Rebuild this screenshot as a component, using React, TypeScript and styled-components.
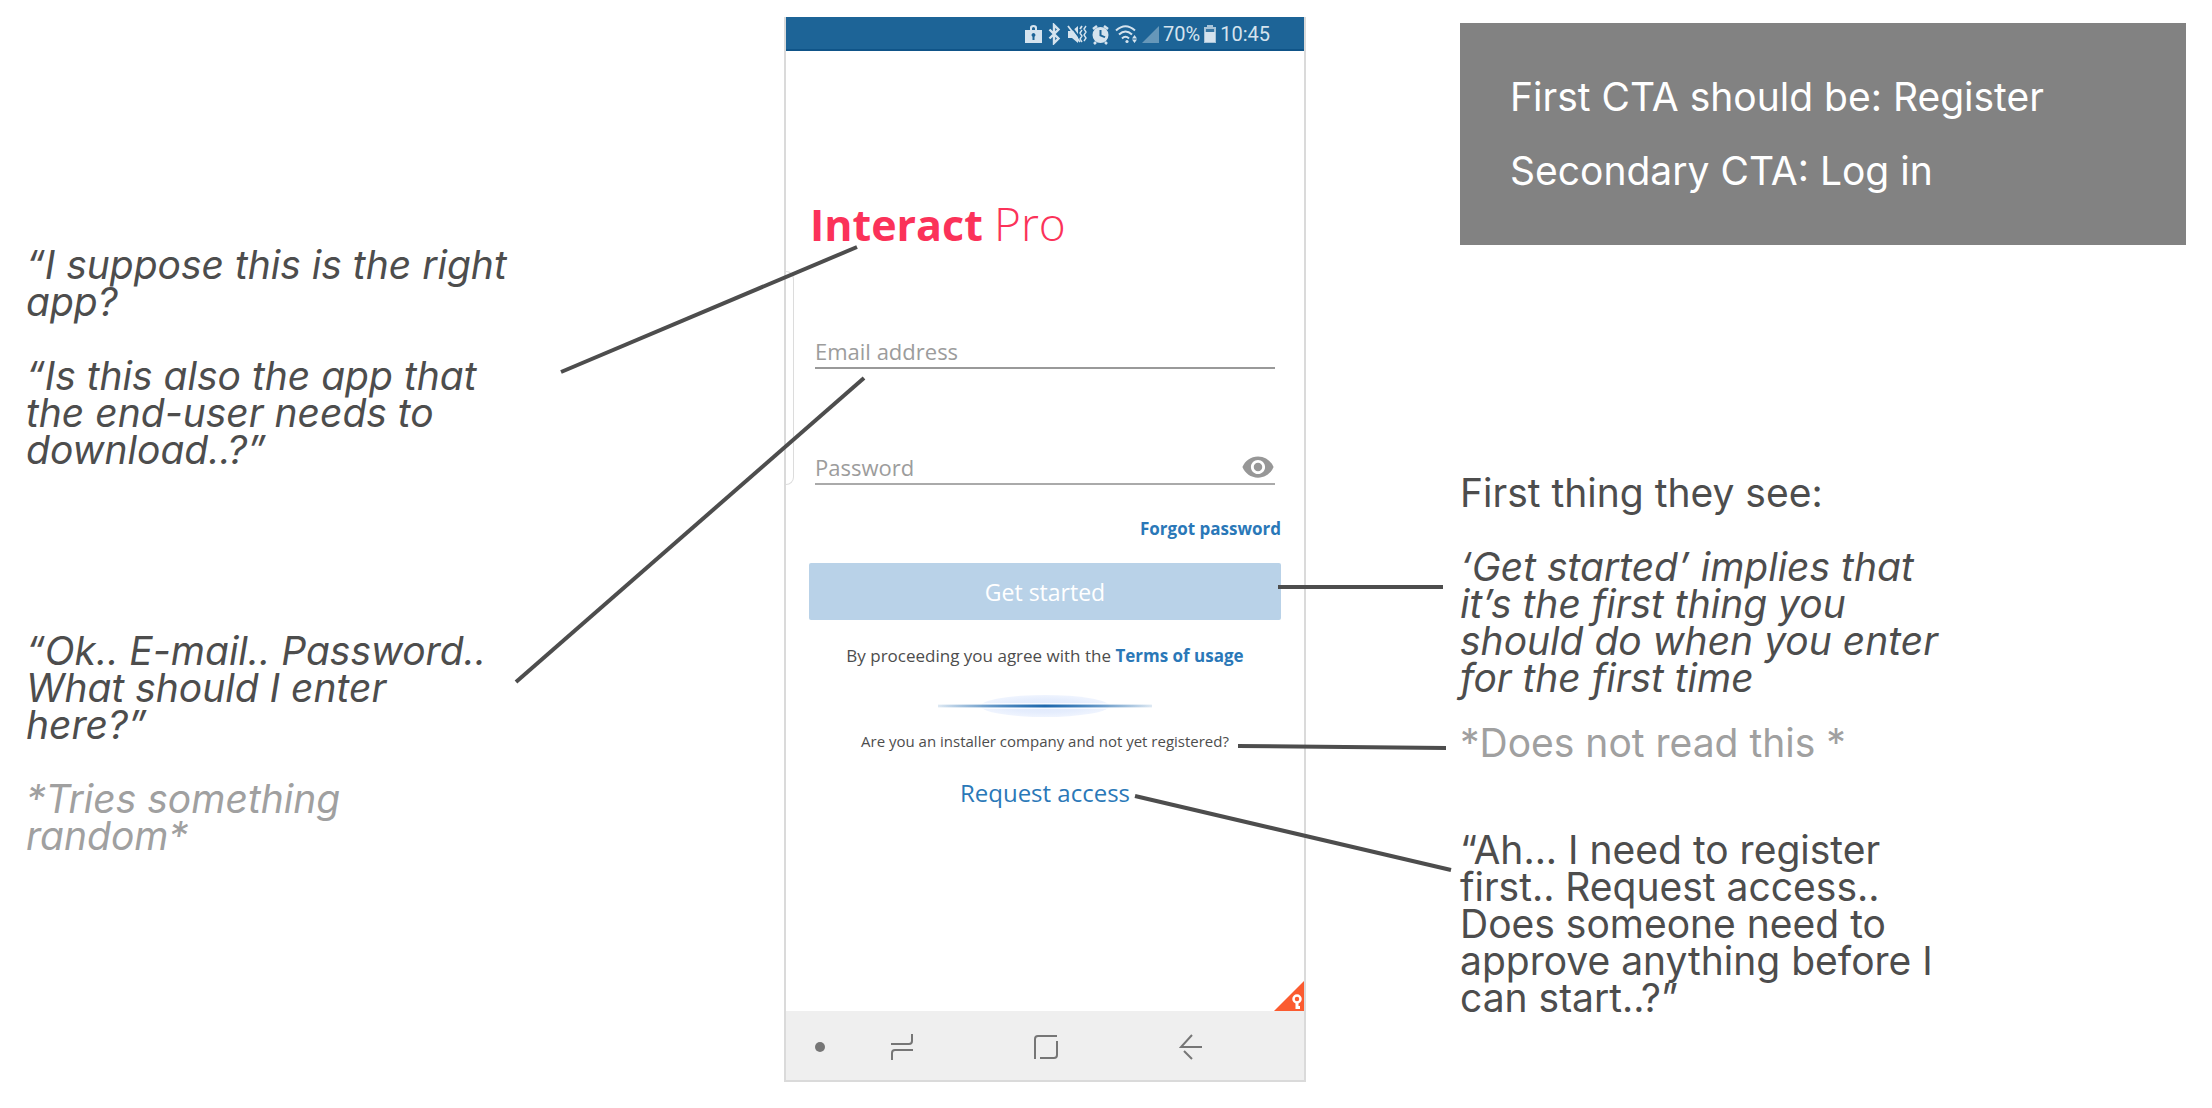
import React from "react";
import styled, { createGlobalStyle } from "styled-components";
import { MdVisibility } from "react-icons/md";

const ink = "#4d4d4d";
const muted = "#a0a0a0";
const blue = "#2a78b8";
const noteFont = `Inter, "Noto Sans", sans-serif`;
const appFont = `"Open Sans", "Noto Sans", sans-serif`;

const GlobalStyle = createGlobalStyle`
  *, *::before, *::after { box-sizing: border-box; }
  body { margin: 0; background: #fff; }
  p, h1, h2 { margin: 0; }
`;

const Board = styled.main`
  display: grid;
  grid-template-columns: minmax(520px, 784fr) 522px minmax(520px, 906fr);
  align-items: start;
  min-height: 100vh;
  color: ${ink};
  font-family: ${noteFont};
`;

const LeftNotes = styled.section`
  display: flex;
  flex-direction: column;
  gap: 164px;
  padding: 246px 0 0 26px;
`;

const RightNotes = styled.section`
  display: flex;
  flex-direction: column;
  padding: 23px 26px 0 154px;
`;

const Note = styled.div<{ $gap?: number }>`
  display: flex;
  flex-direction: column;
  gap: 37px;
  margin-top: ${(p) => p.$gap ?? 0}px;
`;

const Quote = styled.p<{ $italic?: boolean; $muted?: boolean }>`
  font-size: 39px;
  line-height: 37px;
  font-style: ${(p) => (p.$italic ? "italic" : "normal")};
  color: ${(p) => (p.$muted ? muted : "inherit")};
  white-space: nowrap;
`;

const Callout = styled.div`
  display: flex;
  flex-direction: column;
  gap: 37px;
  padding: 55px 50px 56px;
  background: #828282;
  color: #fff;
`;

const PhoneSlot = styled.div`
  position: relative;
  padding-top: 17px;
`;

const Phone = styled.article`
  display: flex;
  flex-direction: column;
  border: 2px solid #dadada;
  border-top: 0;
  font-family: ${appFont};
`;

const StatusBar = styled.header`
  display: flex;
  align-items: center;
  justify-content: flex-end;
  gap: 4px;
  height: 34px;
  padding: 2px 34px 0 0;
  background: #1d6497;
  border-bottom: 2px solid #0f5488;
  color: #d5e3ee;
  font-family: Roboto, sans-serif;
  font-size: 20px;
  line-height: 24px;
`;

const Screen = styled.form`
  position: relative;
  display: flex;
  flex-direction: column;
  min-height: 960px;
  padding: 144px 23px 0;
`;

const Logo = styled.h1`
  padding-left: 1px;
  margin-bottom: 80px;
  font-size: 43px;
  line-height: 60px;
  font-weight: 700;
  color: #fb3259;
`;

const LogoLight = styled.span`
  font-size: 46px;
  line-height: 40px;
  font-weight: 300;
`;

const Field = styled.label`
  display: flex;
  align-items: center;
  height: 34px;
  margin: 0 6px;
  border-bottom: 2px solid #999;

  & + & {
    margin-top: 82px;
    border-color: #aaa;
  }
`;

const Input = styled.input`
  flex: 1;
  min-width: 0;
  height: 30px;
  padding: 0;
  border: 0;
  outline: 0;
  background: transparent;
  font-family: ${appFont};
  font-size: 22px;
  line-height: 30px;
  color: ${ink};

  &::placeholder {
    color: #9c9c9c;
    opacity: 1;
  }
`;

const PlainButton = styled.button`
  display: flex;
  align-items: center;
  justify-content: center;
  padding: 0;
  border: 0;
  background: transparent;
  color: inherit;
`;

const EyeButton = styled(PlainButton)`
  color: #979797;
`;

const Link = styled.a`
  color: ${blue};
  font-weight: 700;
  text-decoration: none;
`;

const Forgot = styled(Link)`
  align-self: flex-end;
  margin-top: 32px;
  font-size: 17px;
  line-height: 24px;
`;

const Primary = styled.button`
  height: 57px;
  margin-top: 22px;
  padding: 0;
  border: 0;
  border-radius: 2px;
  background: #b9d2e8;
  color: #fff;
  font-family: ${appFont};
  font-size: 23px;
  line-height: 30px;
`;

const Terms = styled.p`
  margin-top: 24px;
  text-align: center;
  font-size: 17px;
  line-height: 24px;
  font-weight: 500;
`;

const Glow = styled.svg`
  display: block;
  align-self: center;
  margin: 26px 0 11px;
`;

const Hint = styled.p`
  text-align: center;
  font-size: 15px;
  line-height: 24px;
`;

const Request = styled(Link)`
  align-self: center;
  margin-top: 24px;
  font-size: 24px;
  line-height: 32px;
  font-weight: 400;
`;

const EdgeHandle = styled.span`
  position: absolute;
  left: 0;
  top: 220px;
  width: 8px;
  height: 214px;
  border: 1px solid #dcdcdc;
  border-left: 0;
  border-radius: 0 8px 8px 0;
`;

const CornerFlag = styled.svg`
  position: absolute;
  right: 0;
  bottom: 0;
`;

const NavBar = styled.nav`
  display: grid;
  grid-template-columns: 68fr 96fr 192fr 98fr 64fr;
  height: 69px;
  padding-top: 2px;
  background: #efefef;
  color: #767676;
`;

const Connectors = styled.svg`
  position: absolute;
  left: 0;
  top: 0;
  overflow: visible;
  pointer-events: none;
`;

/* Line ends, measured from the phone's left edge. */
const links = [
  [-223, 372, 73, 247],
  [-268, 682, 80, 378],
  [494, 587, 659, 587],
  [454, 746, 662, 748],
  [351, 796, 667, 870],
];

function StatusIcons() {
  return (
    <svg width="134" height="22" viewBox="0 0 134 22" fill="currentColor" aria-hidden="true">
      <path fillRule="evenodd" d="M0 7h5V4.500Q5 2 8.500 2T12 4.500V7h5v13H0zM7 7h3V5.500Q10 4 8.500 4T7 5.500zM8.500 10a2 2 0 0 0-1 3.700V17h2v-3.300A2 2 0 0 0 8.500 10z" />
      <path d="M24.500 6.500l9 9-4.500 4.500V2l4.500 4.500-9 9" fill="none" stroke="currentColor" strokeWidth="2.400" />
      <path d="M43 8h4l6-5v17l-6-5h-4z" />
      <path d="M45 2l12 16" stroke="#1d6497" strokeWidth="2" />
      <path d="M43 3l12 16M57 3l-2 3" fill="none" stroke="currentColor" strokeWidth="1.800" />
      <path d="M57 7l-2 3 2 3-2 3 2 3M61 3l-2 3 2 3-2 3 2 3-2 3" fill="none" stroke="currentColor" strokeWidth="1.400" />
      <path fillRule="evenodd" d="M75.500 4a8 8 0 1 1 0 16 8 8 0 0 1 0-16zM74.500 7v6l5 2 1-1.600-4-1.600V7z" />
      <path d="M68 6l4-3M83 6l-4-3M69 21l2-2M82 21l-2-2" stroke="currentColor" strokeWidth="2.500" />
      <path d="M91 7.500q9.500-8.500 19 0M94 11.500q6.500-6 13 0M97 15.500q3.500-3.500 7 0" fill="none" stroke="currentColor" strokeWidth="2" />
      <circle cx="102" cy="18.500" r="1.600" />
      <path d="M109.500 12l2.500 3.500h-5zM109.500 20l-2.500-3.500h5z" />
      <path d="M134 3v17h-17z" opacity=".4" />
    </svg>
  );
}

function Battery() {
  return (
    <svg width="12" height="20" viewBox="0 0 12 20" fill="currentColor" aria-hidden="true">
      <path d="M3 1h6v2h3v16H0V3h3z" opacity=".75" />
      <path d="M1 8h10v10H1z" />
      <path d="M2 5h8v3H2z" fill="#1d6497" opacity=".8" />
    </svg>
  );
}

export default function App() {
  return (
    <>
      <GlobalStyle />
      <Board>
        <LeftNotes>
          <Note>
            <Quote $italic>
              “I suppose this is the right
              <br />
              app?
            </Quote>
            <Quote $italic>
              “Is this also the app that
              <br />
              the end-user needs to
              <br />
              download..?”
            </Quote>
          </Note>
          <Note>
            <Quote $italic>
              “Ok.. E-mail.. Password..
              <br />
              What should I enter
              <br />
              here?”
            </Quote>
            <Quote $italic $muted>
              *Tries something
              <br />
              random*
            </Quote>
          </Note>
        </LeftNotes>

        <PhoneSlot>
          <Phone>
            <StatusBar>
              <StatusIcons />
              <span>70%</span>
              <Battery />
              <span>10:45</span>
            </StatusBar>
            <Screen onSubmit={(e) => e.preventDefault()}>
              <EdgeHandle />
              <Logo>
                Interact <LogoLight>Pro</LogoLight>
              </Logo>
              <Field>
                <Input type="email" placeholder="Email address" aria-label="Email address" />
              </Field>
              <Field>
                <Input type="password" placeholder="Password" aria-label="Password" />
                <EyeButton type="button" aria-label="Show password">
                  <MdVisibility size={34} />
                </EyeButton>
              </Field>
              <Forgot href="#forgot">Forgot password</Forgot>
              <Primary type="submit">Get started</Primary>
              <Terms>
                By proceeding you agree with the <Link href="#terms">Terms of usage</Link>
              </Terms>
              <Glow width="214" height="24" viewBox="0 0 214 24" aria-hidden="true">
                <defs>
                  <linearGradient id="beam">
                    <stop offset="0" stopColor="#1d68ad" stopOpacity="0.1" />
                    <stop offset=".5" stopColor="#1d68ad" />
                    <stop offset="1" stopColor="#1d68ad" stopOpacity="0.1" />
                  </linearGradient>
                  <radialGradient id="halo">
                    <stop offset="0" stopColor="#dfe9fc" />
                    <stop offset=".6" stopColor="#e5edfd" />
                    <stop offset="1" stopColor="#eff4fe" />
                  </radialGradient>
                </defs>
                <ellipse cx="107" cy="12" rx="64" ry="11" fill="url(#halo)" />
                <path d="M20 9h174v6H20z" fill="#fff" opacity=".7" />
                <path d="M0 10h214v4H0z" fill="url(#beam)" opacity=".5" />
                <path d="M0 11h214v2H0z" fill="url(#beam)" />
              </Glow>
              <Hint>Are you an installer company and not yet registered?</Hint>
              <Request href="#request">Request access</Request>
              <CornerFlag width="30" height="30" viewBox="0 0 30 30" aria-hidden="true">
                <path d="M30 0v30H0z" fill="#fb5b30" />
                <circle cx="23" cy="18" r="3.500" fill="none" stroke="#fff" strokeWidth="2.500" />
                <path d="M23 21v7M23 26.500h3" stroke="#fff" strokeWidth="3" />
              </CornerFlag>
            </Screen>
            <NavBar>
              <PlainButton type="button" aria-label="Hide navigation bar">
                <svg width="10" height="10">
                  <circle cx="5" cy="5" r="5" fill="currentColor" />
                </svg>
              </PlainButton>
              <PlainButton type="button" aria-label="Recent apps">
                <svg width="24" height="26" viewBox="0 0 24 26" fill="none" stroke="currentColor" strokeWidth="2">
                  <path d="M1 10h18q3 0 3-3V0M23 16H5q-3 0-3 3v7" />
                </svg>
              </PlainButton>
              <PlainButton type="button" aria-label="Home">
                <svg width="24" height="26" viewBox="0 0 24 26" fill="none" stroke="currentColor" strokeWidth="2">
                  <path d="M1 25V5q0-3 3-3h19M23 7v14q0 3-3 3H6" />
                </svg>
              </PlainButton>
              <PlainButton type="button" aria-label="Back">
                <svg width="24" height="26" viewBox="0 0 24 26" fill="none" stroke="currentColor" strokeWidth="2">
                  <path d="M23 13H2L13 1M5 17l8 8" />
                </svg>
              </PlainButton>
            </NavBar>
          </Phone>
          <Connectors width="522" height="1082" stroke={ink} strokeWidth="4" aria-hidden="true">
            {links.map(([x1, y1, x2, y2]) => (
              <line key={y1} x1={x1} y1={y1} x2={x2} y2={y2} />
            ))}
          </Connectors>
        </PhoneSlot>

        <RightNotes>
          <Callout>
            <Quote>First CTA should be: Register</Quote>
            <Quote>Secondary CTA: Log in</Quote>
          </Callout>
          <Note $gap={229}>
            <Quote>First thing they see:</Quote>
            <Quote $italic>
              ‘Get started’ implies that
              <br />
              it’s the first thing you
              <br />
              should do when you enter
              <br />
              for the first time
            </Quote>
          </Note>
          <Note $gap={28}>
            <Quote $muted>*Does not read this *</Quote>
          </Note>
          <Note $gap={70}>
            <Quote>
              “Ah... I need to register
              <br />
              first.. Request access..
              <br />
              Does someone need to
              <br />
              approve anything before I
              <br />
              can start..?”
            </Quote>
          </Note>
        </RightNotes>
      </Board>
    </>
  );
}
